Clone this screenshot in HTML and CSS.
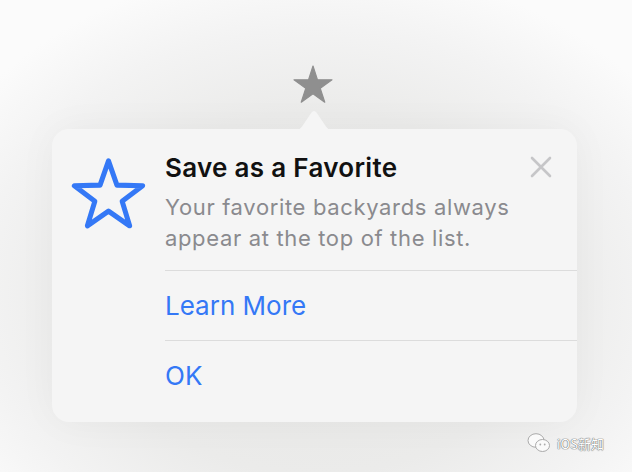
FILE: index.html
```html
<!DOCTYPE html>
<html lang="en">
<head>
    <meta charset="UTF-8">
    <meta name="viewport" content="width=device-width, initial-scale=1.0">
    <title>Save as a Favorite</title>
    <link rel="stylesheet" href="styles.css">
</head>
<body>

    <div class="screen">
        <svg class="toolbar-star" width="44" height="42" viewBox="-22 -22 44 42">
            <path d="M0,-20 L4.49,-6.18 L19.02,-6.18 L7.27,2.36 L11.76,16.18 L0,7.64 L-11.76,16.18 L-7.27,2.36 L-19.02,-6.18 L-4.49,-6.18 Z" />
        </svg>

        <div class="popover">
            <svg class="popover-arrow" width="44" height="22" viewBox="0 0 44 22">
                <path d="M0,22 L4,22 C7,22 8,21 10,18.5 L19.5,4.5 C21,2.5 23,2.5 24.5,4.5 L34,18.5 C36,21 37,22 40,22 L44,22 Z" />
            </svg>

            <div class="tip-head">
                <svg class="tip-icon" width="79" height="76" viewBox="-22 -22 44 42">
                    <path d="M0,-20 L4.7,-6.5 L19.02,-6.18 L7.6,2.5 L11.76,16.18 L0,8 L-11.76,16.18 L-7.6,2.5 L-19.02,-6.18 L-4.7,-6.5 Z" />
                </svg>
                <div class="tip-text">
                    <h2 class="tip-title">Save as a Favorite</h2>
                    <p class="tip-body">Your favorite backyards always appear at the top of the list.</p>
                </div>
                <button class="close-button" aria-label="Close">
                    <svg width="22" height="22" viewBox="0 0 22 22">
                        <path d="M2,2 L20,20 M20,2 L2,20" />
                    </svg>
                </button>
            </div>

            <div class="tip-actions">
                <a class="tip-action" href="#">Learn More</a>
                <a class="tip-action" href="#">OK</a>
            </div>
        </div>

        <div class="watermark">
            <svg width="24" height="22" viewBox="0 0 24 22">
                <ellipse cx="9" cy="8.5" rx="8" ry="6.8" />
                <ellipse cx="15.5" cy="13.5" rx="7" ry="6" />
                <circle cx="13.3" cy="12.5" r="0.9" class="dot" />
                <circle cx="17.7" cy="12.5" r="0.9" class="dot" />
            </svg>
            <span>iOS新知</span>
        </div>
    </div>

</body>
</html>
```

FILE: styles.css
```css
body {
    margin: 0;
    font-family: Inter, "Noto Sans", sans-serif;
}
.screen {
    position: relative;
    width: 632px;
    height: 472px;
    overflow: hidden;
    background: radial-gradient(ellipse 420px 330px at 50% 62%, #e6e6e4 0%, #ebebea 55%, #f3f3f3 80%, #fbfbfb 100%);
    padding-top: 64px;
    box-sizing: border-box;
}
.toolbar-star {
    display: block;
    margin-left: 291px;
}
.toolbar-star path {
    fill: #8f8f8f;
    stroke: #8f8f8f;
    stroke-width: 1.2;
    stroke-linejoin: round;
}
.popover {
    position: relative;
    width: 525px;
    margin: 23px 0 0 52px;
    background: #f5f5f5;
    border-radius: 17px;
    box-shadow: 0 0 40px rgba(0, 0, 0, 0.04);
}
.popover-arrow {
    position: absolute;
    left: 240px;
    top: -21px;
}
.popover-arrow path {
    fill: #f5f5f5;
}
.tip-head {
    display: flex;
    align-items: flex-start;
    padding: 23px 0 0 17px;
}
.tip-icon {
    flex: none;
    margin-top: 5px;
}
.tip-icon path {
    fill: none;
    stroke: #3478f6;
    stroke-width: 2.8;
    stroke-linejoin: round;
}
.tip-text {
    flex: 1;
    margin-left: 17px;
    padding-bottom: 16px;
}
.tip-title {
    margin: 0;
    font-size: 26px;
    line-height: 32px;
    font-weight: 600;
    color: #111;
    letter-spacing: 0.3px;
}
.tip-body {
    margin: 8px 0 0;
    font-size: 22px;
    line-height: 31px;
    color: #8a8a8e;
    letter-spacing: 0.65px;
}
.close-button {
    flex: none;
    background: none;
    border: none;
    padding: 0;
    margin: 4px 25px 0 0;
    cursor: pointer;
}
.close-button path {
    stroke: #c6c6c8;
    stroke-width: 2.6;
    stroke-linecap: round;
}
.tip-actions {
    margin-left: 113px;
    padding-bottom: 12px;
}
.tip-action {
    display: flex;
    align-items: center;
    height: 69px;
    border-top: 1px solid #dcdcdc;
    color: #3478f6;
    font-size: 26px;
    text-decoration: none;
}
.watermark {
    position: absolute;
    right: 28px;
    bottom: 18px;
    display: flex;
    align-items: center;
    gap: 6px;
    font-family: "Noto Sans CJK SC", sans-serif;
    font-size: 13px;
    color: #fff;
    text-shadow: 0 0 1px #777, 0 0 1px #777, 0 0 1px #777;
}
.watermark ellipse {
    fill: #fafafa;
    stroke: #aaa;
    stroke-width: 1;
}
.watermark .dot {
    fill: #aaa;
}
```
